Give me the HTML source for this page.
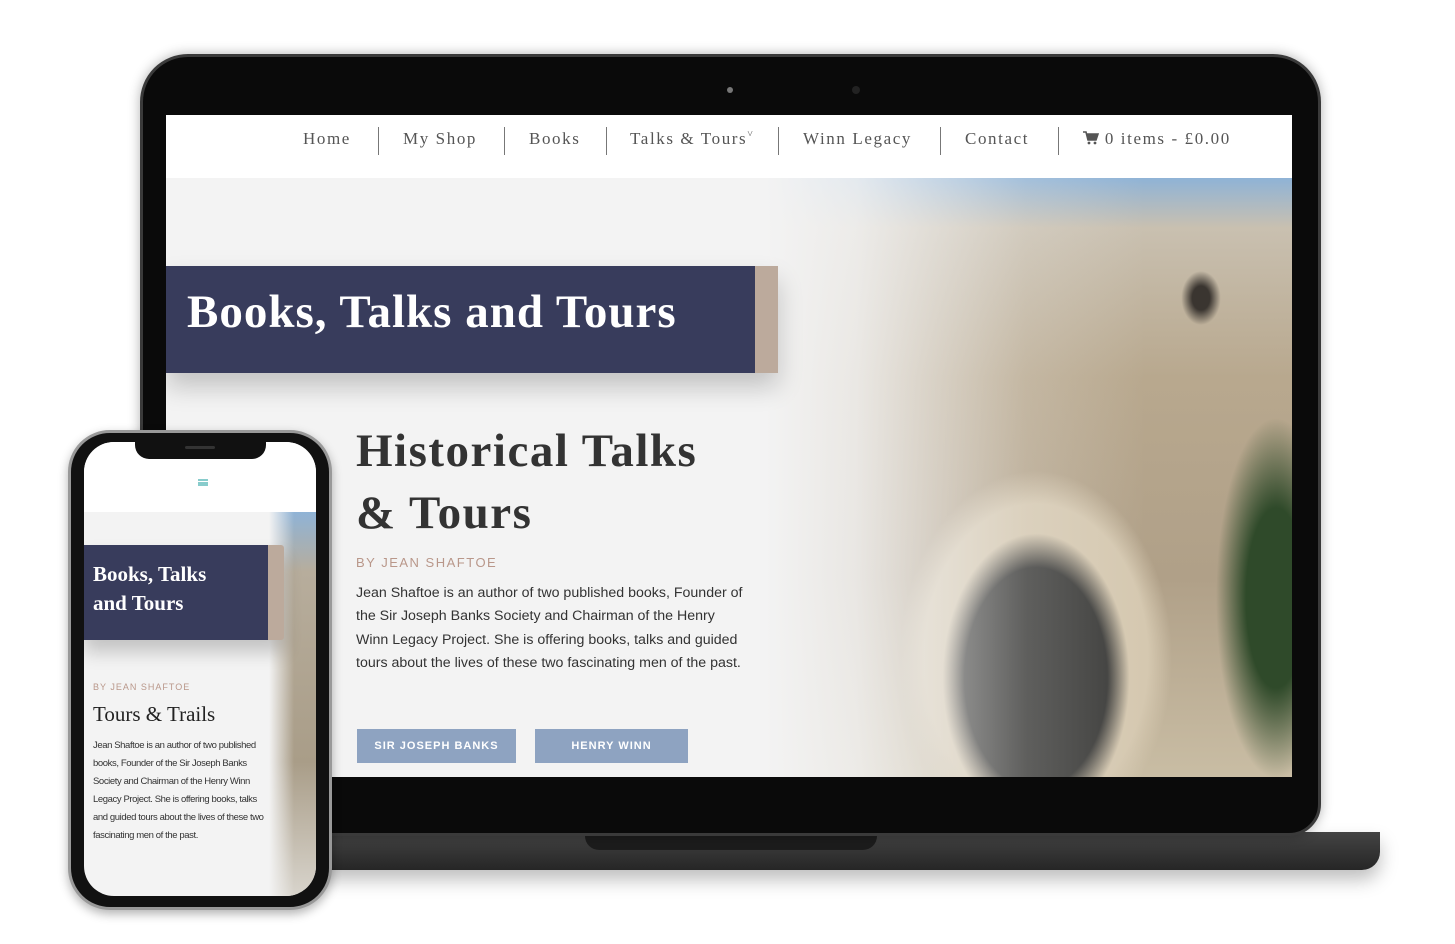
<!DOCTYPE html>
<html><head><meta charset="utf-8"><style>
*{margin:0;padding:0;box-sizing:border-box}
body{width:1455px;height:944px;background:#fff;position:relative;overflow:hidden;font-family:"Liberation Sans",sans-serif}
.abs{position:absolute}
.serif{font-family:"Liberation Serif",serif}
</style></head><body>
<div class="abs" style="left:230px;top:832px;width:1150px;height:38px;background:linear-gradient(#444,#262626);border-radius:0 0 18px 4px;box-shadow:0 10px 18px rgba(0,0,0,.25)"></div>
<div class="abs" style="left:585px;top:832px;width:292px;height:18px;background:#1c1c1c;border-radius:0 0 14px 14px"></div>
<div class="abs" style="left:140px;top:54px;width:1181px;height:782px;background:#0a0a0a;border-radius:48px 48px 32px 32px;border:3px solid #3a3a3a;box-shadow:0 0 12px rgba(0,0,0,.3)"></div>
<div class="abs" style="left:727px;top:87px;width:6px;height:6px;border-radius:50%;background:#777"></div>
<div class="abs" style="left:852px;top:86px;width:8px;height:8px;border-radius:50%;background:#222"></div>
<div class="abs" style="left:166px;top:115px;width:1126px;height:662px;background:#f3f3f3;overflow:hidden">
  <div class="abs" style="left:0;top:0;width:1126px;height:63px;background:#fff"></div>
  <div class="abs serif" style="left:0;top:14px;width:1126px;font-size:17px;color:#555;letter-spacing:1.6px;white-space:nowrap">
    <span class="abs" style="left:137px">Home</span>
    <span class="abs" style="left:212px;top:-2px;width:1px;height:28px;background:#777"></span>
    <span class="abs" style="left:237px">My Shop</span>
    <span class="abs" style="left:338px;top:-2px;width:1px;height:28px;background:#777"></span>
    <span class="abs" style="left:363px">Books</span>
    <span class="abs" style="left:440px;top:-2px;width:1px;height:28px;background:#777"></span>
    <span class="abs" style="left:464px">Talks &amp; Tours<span style="font-size:10px;vertical-align:top;letter-spacing:0">˅</span></span>
    <span class="abs" style="left:612px;top:-2px;width:1px;height:28px;background:#777"></span>
    <span class="abs" style="left:637px">Winn Legacy</span>
    <span class="abs" style="left:774px;top:-2px;width:1px;height:28px;background:#777"></span>
    <span class="abs" style="left:799px">Contact</span>
    <span class="abs" style="left:892px;top:-2px;width:1px;height:28px;background:#777"></span>
    <span class="abs" style="left:917px"><svg width="16" height="14" viewBox="0 0 16 14" style="vertical-align:-1px"><path d="M0 1h3l2 8h8l2-6H4" fill="none" stroke="#555" stroke-width="1.6"/><path d="M4 3h11l-2 6H5z" fill="#555"/><circle cx="6" cy="12" r="1.4" fill="#555"/><circle cx="12" cy="12" r="1.4" fill="#555"/></svg> 0 items - £0.00</span>
  </div>
  <div class="abs" style="left:600px;top:63px;width:526px;height:599px;background:
    radial-gradient(ellipse 110px 170px at 270px 500px,#3a3a38 65%,transparent 85%),
    radial-gradient(ellipse 160px 220px at 270px 480px,#d5c8b0 70%,transparent 85%),
    radial-gradient(ellipse 60px 180px at 510px 420px,#2f4a2a 50%,transparent),
    radial-gradient(ellipse 22px 30px at 435px 120px,#3a3530 40%,transparent 90%),
    linear-gradient(#8fb3d6 0,#c9c0b0 50px,#b8a88e 200px,#b0a088 400px,#c9bda4 599px)"></div>
  <div class="abs" style="left:600px;top:63px;width:526px;height:599px;background:linear-gradient(90deg,#f3f3f3 0,rgba(243,243,243,.85) 90px,rgba(243,243,243,.2) 260px,rgba(243,243,243,0) 380px)"></div>
  <div class="abs" style="left:0;top:151px;width:612px;height:107px;background:#bcaa9c;box-shadow:0 14px 24px rgba(0,0,0,.2)"></div>
  <div class="abs serif" style="left:0;top:151px;width:589px;height:107px;background:#383c5c;color:#fff;font-size:47px;font-weight:bold;letter-spacing:1px;padding:19px 0 0 21px;white-space:nowrap">Books, Talks and Tours</div>
  <div class="abs serif" style="left:190px;top:305px;font-size:47px;font-weight:bold;color:#333;line-height:62px;letter-spacing:1.5px">Historical Talks<br>&amp; Tours</div>
  <div class="abs" style="left:190px;top:440px;font-size:13px;letter-spacing:1.5px;color:#b9978a">BY JEAN SHAFTOE</div>
  <div class="abs" style="left:190px;top:467px;width:395px;font-size:14.2px;line-height:23.3px;color:#333">Jean Shaftoe is an author of two published books, Founder of the Sir Joseph Banks Society and Chairman of the Henry Winn Legacy Project. She is offering books, talks and guided tours about the lives of these two fascinating men of the past.</div>
  <div class="abs" style="left:191px;top:614px;width:159px;height:34px;background:#8ea3c1;color:#fff;font-size:11px;font-weight:bold;letter-spacing:1px;text-align:center;line-height:34px">SIR JOSEPH BANKS</div>
  <div class="abs" style="left:369px;top:614px;width:153px;height:34px;background:#8ea3c1;color:#fff;font-size:11px;font-weight:bold;letter-spacing:1px;text-align:center;line-height:34px">HENRY WINN</div>
</div>
<div class="abs" style="left:68px;top:430px;width:264px;height:480px;border-radius:42px;background:#111;border:3px solid #999;box-shadow:0 4px 10px rgba(0,0,0,.3)"></div>
<div class="abs" style="left:84px;top:442px;width:232px;height:454px;border-radius:30px;background:#f3f3f3;overflow:hidden">
  <div class="abs" style="left:0;top:0;width:232px;height:70px;background:#fff"></div>
  <div class="abs" style="left:185px;top:70px;width:47px;height:384px;background:linear-gradient(#8fb3d6,#b7ad9c 60px,#a99d88 250px,#d8d4cc);"></div>
  <div class="abs" style="left:185px;top:70px;width:47px;height:384px;background:linear-gradient(90deg,#f3f3f3,rgba(243,243,243,0) 25px)"></div>
  <div class="abs" style="left:114px;top:37px;width:10px;height:7px;border-top:2px solid #8cc;border-bottom:2px solid #8cc"></div>
  <div class="abs" style="left:114px;top:40px;width:10px;height:1.5px;background:#8cc"></div>
  <div class="abs" style="left:0;top:103px;width:200px;height:95px;background:#bcaa9c;border-radius:0 3px 3px 0;box-shadow:0 12px 18px rgba(0,0,0,.2)"></div>
  <div class="abs serif" style="left:0;top:103px;width:184px;height:95px;background:#383c5c;color:#fff;font-size:21px;font-weight:bold;padding:15px 0 0 9px;line-height:29px">Books, Talks<br>and Tours</div>
  <div class="abs" style="left:9px;top:240px;font-size:9px;letter-spacing:1px;color:#b9978a">BY JEAN SHAFTOE</div>
  <div class="abs serif" style="left:9px;top:260px;font-size:21px;color:#222">Tours &amp; Trails</div>
  <div class="abs" style="left:9px;top:295px;width:176px;font-size:9.5px;line-height:17.9px;color:#333;letter-spacing:-.4px">Jean Shaftoe is an author of two published books, Founder of the Sir Joseph Banks Society and Chairman of the Henry Winn Legacy Project. She is offering books, talks and guided tours about the lives of these two fascinating men of the past.</div>
</div>
<div class="abs" style="left:135px;top:440px;width:131px;height:19px;background:#111;border-radius:0 0 14px 14px"></div>
<div class="abs" style="left:185px;top:446px;width:30px;height:3px;background:#333;border-radius:2px"></div>
</body></html>
